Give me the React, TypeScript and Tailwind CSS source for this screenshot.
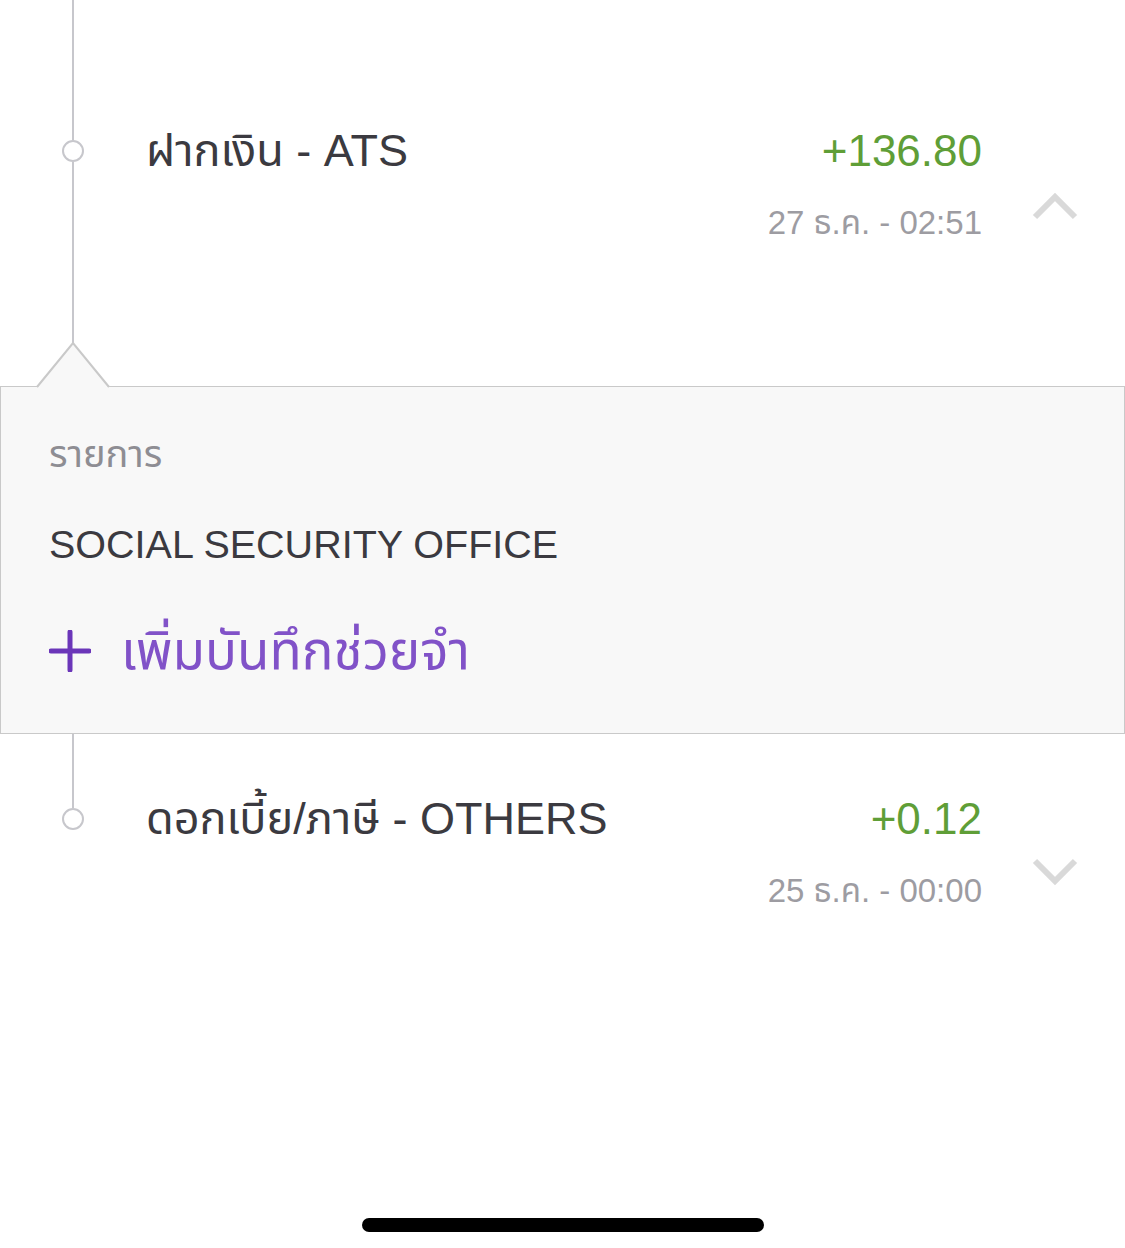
import React from "react";

const FONT = { fontFamily: '"Liberation Sans", "Noto Sans Thai", "Noto Sans", sans-serif' };

function Chevron({ up }: { up: boolean }) {
  return (
    <svg width="46" height="30" viewBox="0 0 46 30" className="block">
      <polyline
        points={up ? "3,26 23,6 43,26" : "3,4 23,24 43,4"}
        fill="none"
        stroke="#d9d9d9"
        strokeWidth="6"
      />
    </svg>
  );
}

function Dot() {
  return <div className="w-[22px] h-[22px] rounded-full border-[2.5px] border-[#c7c7cc] bg-white shrink-0" />;
}

interface RowProps {
  title: string;
  amount: string;
  date: string;
  open: boolean;
  lineTop: number;
  height: number;
}

function TxRow({ title, amount, date, open, lineTop, height }: RowProps) {
  return (
    <div className="flex" style={{ height }}>
      {/* timeline */}
      <div className="w-[146px] flex flex-col items-center shrink-0">
        <div className="w-[2px] bg-[#c7c7cc]" style={{ height: lineTop }} />
        <Dot />
        {open ? <div className="w-[2px] flex-1 bg-[#c7c7cc]" /> : <div className="flex-1" />}
      </div>
      <div className="flex-1 flex" style={{ paddingTop: lineTop - 19 }}>
        <div className="flex-1 text-[45px] leading-[60px] text-[#3b3a40]">{title}</div>
        <div className="flex flex-col items-end">
          <div className="text-[44px] leading-[60px] text-[#5f9e37]">{amount}</div>
          <div className="mt-[20px] text-[33px] leading-[44px] text-[#9d9ca2]">{date}</div>
        </div>
        <div className="w-[143px] flex justify-center pl-[2px]">
          <div className={open ? "mt-[70px]" : "mt-[68px]"}>
            <Chevron up={open} />
          </div>
        </div>
      </div>
    </div>
  );
}

export default function App() {
  return (
    <div className="w-[1125px] h-[1248px] bg-white flex flex-col overflow-hidden" style={FONT}>
      <TxRow title="ฝากเงิน - ATS" amount="+136.80" date="27 ธ.ค. - 02:51" open lineTop={140} height={387} />

      {/* expanded detail panel */}
      <div className="relative h-[348px] bg-[#f8f8f8] border border-[#c9c9c9] -mt-[1px] pl-[48px] pt-[43px]">
        <svg width="74" height="46" viewBox="0 0 74 46" className="absolute left-[35px] -top-[45px]">
          <polygon points="1,46 37,1 73,46" fill="#f8f8f8" />
          <polyline points="1,45 37,1 73,45" fill="none" stroke="#c9c9c9" strokeWidth="2" />
        </svg>
        <div className="text-[38px] leading-[48px] text-[#8e8d93]">รายการ</div>
        <div className="mt-[40px] text-[39.5px] leading-[52px] text-[#3b3a40]">SOCIAL SECURITY OFFICE</div>
        <div className="mt-[50px] flex items-center">
          <svg width="42" height="42" viewBox="0 0 42 42" className="shrink-0">
            <path d="M21 2v38M2 21h38" stroke="#6b36b9" strokeWidth="5" strokeLinecap="round" />
          </svg>
          <span className="ml-[30px] text-[53px] leading-[62px] text-[#8152c8]">เพิ่มบันทึกช่วยจำ</span>
        </div>
      </div>

      <div className="-mt-[1px]">
        <TxRow title="ดอกเบี้ย/ภาษี - OTHERS" amount="+0.12" date="25 ธ.ค. - 00:00" open={false} lineTop={75} height={200} />
      </div>

      <div className="flex-1" />
      <div className="flex justify-center pb-[16px]">
        <div className="w-[402px] h-[14px] rounded-full bg-black" />
      </div>
    </div>
  );
}
